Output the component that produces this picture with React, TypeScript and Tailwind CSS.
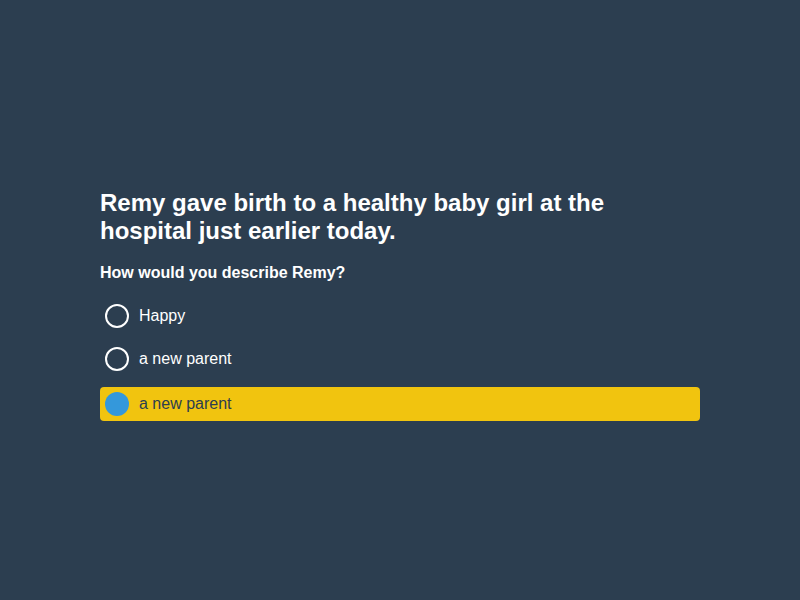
import React from "react";

const options = [
  { label: "Happy", selected: false },
  { label: "a new parent", selected: false },
  { label: "a new parent", selected: true },
];

function App() {
  return (
    <div
      className="w-full h-screen bg-[#2c3e50] flex items-center justify-center"
      style={{ fontFamily: '"Liberation Sans", Arial, sans-serif' }}
    >
      <div className="w-[600px] mt-[9px]">
        <h1 className="text-white font-bold text-[24px] leading-[28px] mb-[18px] w-[560px]">
          Remy gave birth to a healthy baby girl at the hospital just earlier today.
        </h1>
        <h2 className="text-white font-bold text-[16px] leading-[20px] mb-[17px]">
          How would you describe Remy?
        </h2>
        <div className="flex flex-col gap-[10px]">
          {options.map((o, i) => (
            <div
              key={i}
              className={
                o.selected
                  ? "flex items-center h-[34px] px-[5px] rounded bg-[#f1c40f] text-[#2c3e50] mt-[1px]"
                  : "flex items-center h-[33px] px-[5px] rounded text-white"
              }
            >
              {o.selected ? (
                <span className="w-[24px] h-[24px] rounded-full bg-[#3498db]" />
              ) : (
                <span className="w-[24px] h-[24px] rounded-full border-2 border-white" />
              )}
              <span className="ml-[10px] text-[16px]">{o.label}</span>
            </div>
          ))}
        </div>
      </div>
    </div>
  );
}

export default App;
